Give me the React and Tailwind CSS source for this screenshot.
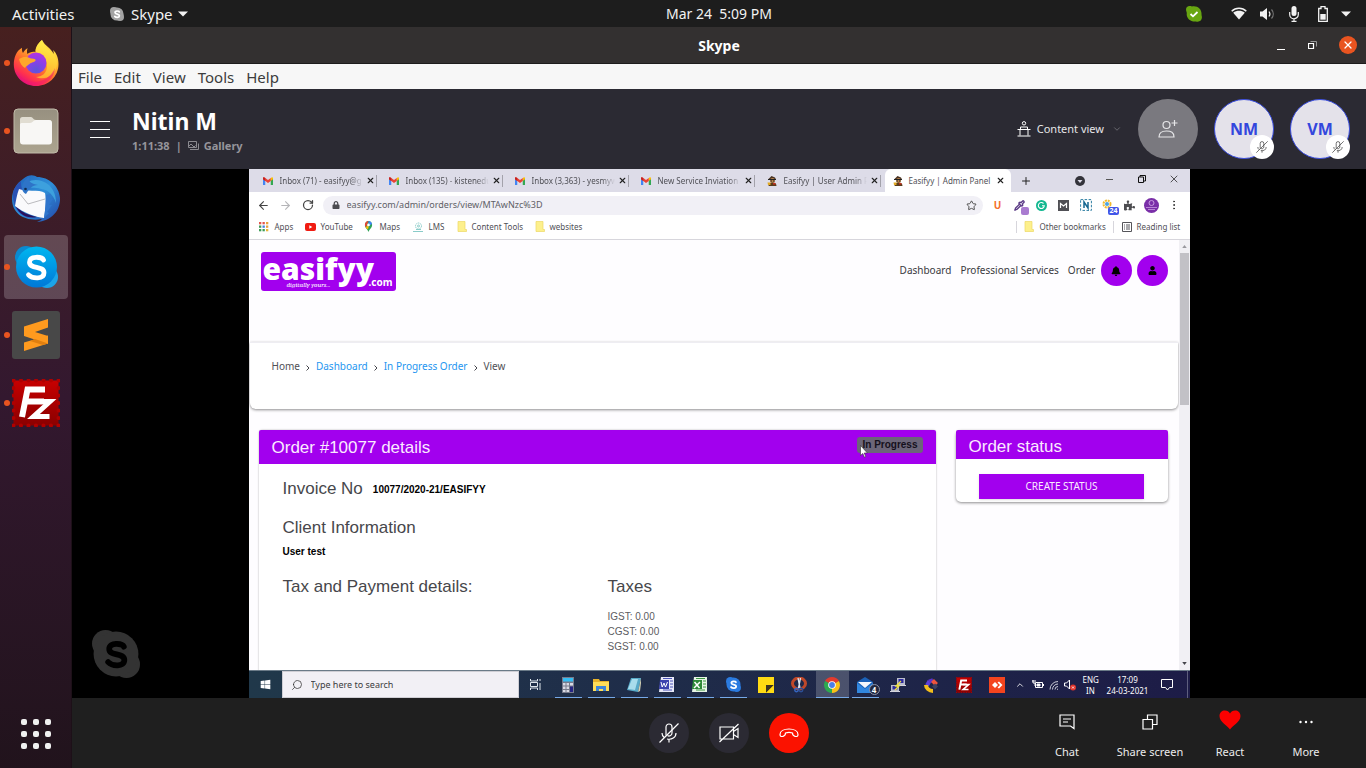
import React from "react";
import { FaBell, FaUser, FaPuzzlePiece, FaWindows, FaLock, FaHeart } from "react-icons/fa";
import { ArrowLeft, ArrowRight, RotateCw, Star, Pipette, Search, X, Plus, ChevronUp, ChevronDown, EllipsisVertical } from "lucide-react";

const dockApps = [
  { name: "Firefox", Icon: Firefox, running: true },
  { name: "Files", Icon: Files, running: true },
  { name: "Thunderbird", Icon: Thunderbird, running: false },
  { name: "Skype", Icon: SkypeLogo, running: true, active: true },
  { name: "Sublime Text", Icon: Sublime, running: true },
  { name: "FileZilla", Icon: FileZilla, running: true },
];

function Firefox() {
  return (
    <svg viewBox="0 0 48 48" className="size-12">
      <defs>
        <linearGradient id="ffBody" x1="0.85" y1="0.05" x2="0.25" y2="0.95">
          <stop offset="0" stopColor="#fff44f" />
          <stop offset="0.35" stopColor="#ffb52e" />
          <stop offset="0.62" stopColor="#ff6a2e" />
          <stop offset="0.85" stopColor="#ff2f4f" />
          <stop offset="1" stopColor="#e0107f" />
        </linearGradient>
        <radialGradient id="ffGlobe" cx="0.5" cy="0.85" r="0.9">
          <stop offset="0" stopColor="#5b56d8" />
          <stop offset="0.5" stopColor="#8a3fe8" />
          <stop offset="1" stopColor="#b833e1" />
        </radialGradient>
        <linearGradient id="ffFlame" x1="0.5" y1="0" x2="0.5" y2="1">
          <stop offset="0" stopColor="#fff34a" />
          <stop offset="1" stopColor="#ffbf2f" />
        </linearGradient>
      </defs>
      <path d="M30 1c-5 4-7 9-6.500 12-3-.8-6 .2-8 2-.8-2-.6-4 .1-5.800-2 1-3.500 2.700-4.600 4.700-1-1.500-1.200-3.500-1-5.200C4 12 1.800 19 1.800 25.500 2 38 12 47 24 47s22.500-9 22.500-22c0-6-2-11-5.500-14 .6 1.500.8 2.700.8 4C39 9 33 7 30 1z" fill="url(#ffBody)" />
      <path d="M30 1c-5 4-7 9-6 13 8 2 11 7 11 13 0 7-5 11-11 11 8 4 20-1 21-13C46 14 33 12 30 1z" fill="url(#ffFlame)" opacity=".8" />
      <circle cx="24" cy="24" r="10.500" fill="url(#ffGlobe)" />
      <path d="M7 20c4-3 9-2.500 12-.5 3 .3 5 .4 4.500 2-.8 2-4 1.500-6 3.500-2 1.800-3.500 2-4.500 4-3-1.500-5-5-6-9z" fill="#ffa72b" />
      <path d="M4 32c4 9 14 12 22 10.500C34 41 40 36 43 29c-1 11-10 17.500-19 17.500C14 46.500 6 40 4 32z" fill="#f0186f" opacity=".55" />
    </svg>
  );
}

function Files() {
  return (
    <svg viewBox="0 0 48 48" className="size-12">
      <defs>
        <linearGradient id="filesBg" x1="0" y1="0" x2="0" y2="1">
          <stop offset="0" stopColor="#979080" />
          <stop offset="1" stopColor="#aca48f" />
        </linearGradient>
      </defs>
      <rect x="2" y="2" width="44" height="44" rx="4" fill="url(#filesBg)" stroke="#c0baa9" strokeWidth="1" />
      <path d="M8 24V12.500A2.500 2.500 0 0 1 10.500 10H19c2 0 2 3 5 3h13a2.500 2.500 0 0 1 2.500 2.500V24z" fill="#e1ddd2" />
      <path d="M8 17.500A1.500 1.500 0 0 1 9.500 16H18c3 0 3-3 6-3h13a3 3 0 0 1 3 3v18.500a3 3 0 0 1-3 3H11a3 3 0 0 1-3-3z" fill="#f8f7f5" />
    </svg>
  );
}

function Thunderbird() {
  return (
    <svg viewBox="0 0 48 48" className="size-12">
      <defs>
        <linearGradient id="tbBody" x1="0" y1="0" x2="1" y2="1">
          <stop offset="0" stopColor="#1e5fb8" />
          <stop offset="0.5" stopColor="#2f8fd8" />
          <stop offset="1" stopColor="#2345a8" />
        </linearGradient>
      </defs>
      <path d="M11 4C17-1 22 0 25 2c12 0 22 9 23 21 .5 12-8 23-23 24 3-1 5-3 5-3C15 47 0 40 0 24 0 15 5 8 11 4z" fill="url(#tbBody)" />
      <path d="M1 20c0-6 4-11 8-14 0 6 1 10 4 12L7 29c1 8 6 12 12 14C8 42 1 33 1 20z" fill="#2851b4" />
      <path d="M10 14c4-10 17-12 27-4 5 5 7 11 7 18-3-9-8-13-15-14-7-2-14-1-19 0z" fill="#3da0dd" />
      <path d="M7 14c6 3 20 0 26 4 1 5 1 14-1 25-9-1-20-5-29-12 1-6 2-12 4-17z" fill="#fafafc" />
      <path d="M8 19l8 10 17-5" fill="none" stroke="#a9a9ad" strokeWidth=".8" />
      <path d="M10 14c0-5 2-9 7-12-1 5 3 7 9 8-6 0-9 4-12 9-2-1-3-2-4-5z" fill="#2e74c8" />
      <circle cx="13.500" cy="14" r="1.300" fill="#102a50" />
      <path d="M34 20l5-1-2 5 4 0-4 6 3 0-5 7 2 1-5 5c1-7 2-15 2-23z" fill="#2f76cd" />
      <path d="M4 32c6 5 12 8 21 10-9 2-17-2-21-10z" fill="#28105c" />
    </svg>
  );
}

const skypeS = "M31.500 17C30 13.500 17.500 12.500 17.500 19.200c0 7.300 14.500 3 14.500 10.600 0 6.700-11.500 6.200-15.500 2";

function SkypeLogo() {
  return (
    <svg viewBox="0 0 48 48" className="size-12">
      <defs>
        <linearGradient id="skBg" x1="0" y1="0" x2="0" y2="1">
          <stop offset="0" stopColor="#00b7f0" />
          <stop offset="1" stopColor="#0078d7" />
        </linearGradient>
      </defs>
      <circle cx="14" cy="14" r="11" fill="#0a8ad0" />
      <circle cx="35" cy="34" r="11" fill="#1ba4e8" />
      <circle cx="24.500" cy="24" r="20.500" fill="url(#skBg)" />
      <path d={skypeS} fill="none" stroke="#fff" strokeWidth="4.800" strokeLinecap="round" />
    </svg>
  );
}

function SkypeMono({ className, letter }) {
  return (
    <svg viewBox="1 1 46 46" className={className} aria-hidden="true">
      <g fill="currentColor"><circle cx="14" cy="14" r="13" /><circle cx="34" cy="34" r="13" /><circle cx="24" cy="24" r="21.500" /></g>
      <path d={skypeS} fill="none" stroke={letter} strokeWidth="5.500" strokeLinecap="round" />
    </svg>
  );
}

function Sublime() {
  return (
    <svg viewBox="0 0 48 48" className="size-12">
      <rect width="48" height="48" rx="3" fill="#484848" />
      <path d="M36 24.500v8L12 40v-8.500z" fill="#ff9a1e" />
      <path d="M36 8v8.500l-13 4.500 13 4v8L12 25v-9.500z" fill="#ff9a1e" />
      <path d="M23 28l13 4.500-5 1.500-13-4z" fill="#e07f10" />
    </svg>
  );
}

function FileZilla({ small }) {
  return (
    <svg viewBox="0 0 48 48" className={small ? "size-4" : "size-12"}>
      <defs>
        <linearGradient id="fzBg" x1="0" y1="0" x2="0" y2="1">
          <stop offset="0" stopColor="#c80000" />
          <stop offset="1" stopColor="#8a0000" />
        </linearGradient>
      </defs>
      <rect x="1.500" y="1.500" width="45" height="45" fill="url(#fzBg)" />
      <rect x="1.500" y="1.500" width="45" height="45" fill="none" stroke={small ? "#a80000" : "#b00000"} strokeWidth="4" strokeLinecap="round" strokeDasharray="0.1 7.400" />
      <g fill="none" stroke="#fff" strokeWidth="6">
        <path d="M33 10.500H15.500L10 38M13 22.500h19" />
        <path d="M21 22.500h17L21.500 37.500h16" strokeWidth="5" />
      </g>
    </svg>
  );
}

function Gmail() {
  return (
    <svg viewBox="0 0 20 16" className="h-2 w-[10px] shrink-0">
      <path d="M0 3v13h4.500V6z" fill="#4285f4" />
      <path d="M15.500 6v10H20V3z" fill="#34a853" />
      <path d="M15.500 2v6L20 4.500V2c0-2-2.500-2.500-4.500 0z" fill="#fbbc04" />
      <path d="M0 2v2.500L10 12l5.500-4V2L10 6 4.500 2C2.500 0 0 0 0 2z" fill="#ea4335" />
      <path d="M0 2v2.500L4.500 8V2C2 0 0 0 0 2z" fill="#c5221f" />
    </svg>
  );
}

function Detective() {
  return (
    <svg viewBox="0 0 20 20" className="size-[10px] shrink-0">
      <path d="M5 4l4-4 7 3 2 4H2z" fill="#4a3322" />
      <circle cx="11" cy="9" r="5" fill="#b98248" />
      <path d="M2 6h16v2H2zM7 9h3v2H7zM12 9h3v2h-3z" fill="#222" />
      <path d="M3 20c0-5 3-7 8-7s8 2 8 7z" fill="#5a3c1c" />
      <path d="M1 13h6v5H2z" fill="#e2aa22" />
      <path d="M12 14h5v3h-5z" fill="#c92d1c" />
    </svg>
  );
}

function Folder() {
  return (
    <svg viewBox="0 0 10 11" className="h-[11px] w-[10px] shrink-0">
      <path d="M1 .500h7v8h1.500v2H1z" fill="#fdf08c" stroke="#ecd964" strokeWidth=".7" />
    </svg>
  );
}

function MicOff({ className }) {
  return (
    <svg viewBox="0 0 20 20" className={className} fill="none" stroke="currentColor" strokeWidth="1.200">
      <path d="M7 12.500V4a3 3 0 0 1 6 0v6a3 3 0 0 1-4.500 2.600" />
      <path d="M3 10c0 2 .8 3.300 2 4.300M8 16c4.800 1 9-1.500 9-6M10 16v3.500M.500 19.500l19-19" />
    </svg>
  );
}

const tabs = [
  { title: "Inbox (71) - easifyy@g", Icon: Gmail },
  { title: "Inbox (135) - kistenedu", Icon: Gmail },
  { title: "Inbox (3,363) - yesmyw", Icon: Gmail },
  { title: "New Service Inviation -", Icon: Gmail },
  { title: "Easifyy | User Admin Pa", Icon: Detective },
  { title: "Easifyy | Admin Panel", Icon: Detective, active: true },
];

function TopBar() {
  return (
    <header className="grid h-[27px] shrink-0 grid-cols-[1fr_auto_1fr] items-center bg-[#1d1d1d] text-[14px] text-[#f2f2f2]">
      <div className="flex items-center pl-3 text-[15px] leading-5">
        <button className="w-[98px] text-left">Activities</button>
        <button className="flex items-center gap-[7px]">
          <SkypeMono className="size-[14px] text-[#a3a3a3]" letter="#fff" />
          Skype
          <svg viewBox="0 0 10 6" className="-ml-[2px] h-[6px] w-[10px]"><path d="M0 .500h10L5 5.500z" fill="#f2f2f2" /></svg>
        </button>
      </div>
      <button className="pl-[72px] whitespace-pre">Mar 24  5:09 PM</button>
      <div className="flex items-center justify-end pr-[15px]">
        <svg viewBox="0 0 16 16" className="mr-[29px] size-4">
          <path d="M0 4C0 0 3-.5 6 .5c6-1 10 3 9.500 8.500 1.500 4-1 7.500-5.500 6.500C4 16 0 12 .8 7z" fill="#68a611" />
          <path d="M4.500 8l2.500 2.300 4.500-4.300" fill="none" stroke="#fff" strokeWidth="1.800" />
        </svg>
        <svg viewBox="0 0 16 13" className="mr-3 h-[13px] w-4">
          <path d="M.700 4.300c4-4 10.600-4 14.600 0" fill="none" stroke="#f2f2f2" strokeWidth="1.500" />
          <path d="M8 12.500L2.200 5.800c3.500-2.600 8.100-2.600 11.600 0z" fill="#f2f2f2" />
        </svg>
        <svg viewBox="0 0 16 14" className="mr-[14px] h-[14px] w-4">
          <path d="M1 4.500h2.500L8 1v12L3.500 9.500H1z" fill="#f2f2f2" />
          <path d="M10 4.500c1.200 1.600 1.200 3.400 0 5" fill="none" stroke="#f2f2f2" strokeWidth="1.200" />
          <path d="M12.500 2.500c2.300 2.600 2.300 6.400 0 9" fill="none" stroke="#777" strokeWidth="1.200" />
        </svg>
        <svg viewBox="0 0 10 16" className="mr-[19px] h-4 w-[10px]">
          <rect x="2.500" y="0" width="5" height="10" rx="2.500" fill="#f2f2f2" />
          <path d="M.7 6v2.500a4.300 4.300 0 0 0 8.600 0V6M5 12.500V15M2.500 15.300h5" fill="none" stroke="#f2f2f2" strokeWidth="1.200" />
        </svg>
        <svg viewBox="0 0 10 16" className="mr-[13px] h-4 w-[10px]">
          <path d="M3 .500h4v2h2.300v12.800H.700V2.500H3z" fill="none" stroke="#f2f2f2" strokeWidth="1.300" /><path d="M2.300 8h5.400v5.700H2.300z" fill="#f2f2f2" />
        </svg>
        <svg viewBox="0 0 10 6" className="h-[6px] w-[10px]"><path d="M0 .500h10L5 5.500z" fill="#f2f2f2" /></svg>
      </div>
    </header>
  );
}

function Dock() {
  return (
    <nav aria-label="Dock" className="flex w-[72px] shrink-0 flex-col border-r border-[#1d1018] bg-linear-to-b from-[#47201f] via-[#33182f] via-50% to-[#21131c] pt-[2px]">
      {dockApps.map(({ name, Icon, running, active }) => (
        <button key={name} aria-label={name} className="flex h-[68px] items-center pl-1">
          <span className={active ? "flex size-16 items-center rounded bg-white/20" : "flex size-16 items-center"}>
            <span className={running ? "size-[6px] rounded-full bg-[#e95420]" : "size-[6px]"} />
            <span className="ml-[2px]"><Icon /></span>
          </span>
        </button>
      ))}
      <button aria-label="Show applications" className="mt-auto mb-[19px] grid grid-cols-3 gap-[6px] self-center">
        {Array.from({ length: 9 }, (_, i) => (
          <span key={i} className="size-[6px] rounded-xs bg-[#f0f0f0]" />
        ))}
      </button>
    </nav>
  );
}

function WindowTitle() {
  return (
    <div className="grid h-[37px] shrink-0 grid-cols-[1fr_auto_1fr] items-center border-b border-[#1d1c1c] bg-[#333030]">
      <span />
      <h1 className="text-[14px] font-bold text-white">Skype</h1>
      <div className="flex items-center justify-end gap-[22px] pr-[9px] text-white">
        <button aria-label="Minimize" className="flex size-[9px] items-end"><span className="h-px w-2 bg-white" /></button>
        <button aria-label="Restore">
          <svg viewBox="0 0 9 9" className="size-[9px]" fill="none"><path d="M.5 2.500h5v5h-5z" stroke="#fff" strokeWidth="1.200" /><path d="M2.500.500h6v5" stroke="#999" /></svg>
        </button>
        <button aria-label="Close" className="flex size-[18px] items-center justify-center rounded-full bg-[#e95420]">
          <X className="size-3" strokeWidth={2.600} />
        </button>
      </div>
    </div>
  );
}

function Avatar({ initials }) {
  return (
    <button className="relative flex size-[60px] items-center justify-center rounded-full border border-[#3b4ee0] bg-[#e4e2ea] text-[16px] font-bold text-[#3347dd]">
      {initials}
      <span className="absolute -right-px -bottom-px flex size-6 items-center justify-center rounded-full bg-white text-[#3c3c3c]">
        <MicOff className="size-3" />
      </span>
    </button>
  );
}

function CallHeader() {
  return (
    <div className="flex h-20 shrink-0 items-center justify-between bg-[#2b2a33] pr-4 pl-[18px] text-white">
      <div className="flex items-center gap-[22px]">
        <button aria-label="Menu" className="flex flex-col gap-[7px]">
          <span className="h-px w-5 bg-white" /><span className="h-px w-5 bg-white" /><span className="h-px w-5 bg-white" />
        </button>
        <div className="pt-1">
          <h2 className="text-[23px] leading-[28px] font-bold">Nitin M</h2>
          <div className="flex items-center pt-px text-[11px] leading-5 font-bold text-[#96959b]">
            1:11:38 <span className="mx-[6px]">|</span>
            <svg viewBox="0 0 11 10" className="mr-[5px] h-[10px] w-[11px]" fill="none" stroke="currentColor" strokeWidth=".9"><path d="M.5.500h8v6h-8zM2 8.500h8.500V2.500M1 5l2-2 3 3 1.500-1.500" /></svg>
            Gallery
          </div>
        </div>
      </div>
      <div className="flex items-center gap-4">
        <button className="flex items-center text-[11px] leading-4 text-[#e6e6e8]">
          <svg viewBox="0 0 14 16" className="mr-[6px] h-4 w-[14px]" fill="none" stroke="#fff"><circle cx="7" cy="2.300" r="1.700" /><path d="M3.500 8V6h7v2M.500 8.500h13M3 8.500v6M11 8.500v6M.500 15h13" /></svg>
          Content view
          <ChevronDown className="ml-2 size-[10px] text-[#8c8b92]" strokeWidth={1.500} />
        </button>
        <button aria-label="Add people" className="flex size-[60px] items-center justify-center rounded-full bg-[#7a797f]">
          <svg viewBox="0 0 20 18" className="h-[18px] w-5" fill="none" stroke="#e6e6e8" strokeWidth="1.200"><circle cx="8.500" cy="5" r="3.500" /><path d="M1 17c0-4.500 3-6 7.500-6s7.500 1.500 7.500 6zM16.500 0v6M13.500 3h6" /></svg>
        </button>
        <Avatar initials="NM" />
        <Avatar initials="VM" />
      </div>
    </div>
  );
}

function TabStrip() {
  return (
    <div className="flex h-[23px] shrink-0 bg-[#dddce8] pl-[6px] text-[8px] text-[#505056]">
      {tabs.map(({ title, Icon, active }) => (
        <div key={title} className={active ? "flex w-[126px] shrink-0 items-center rounded-t-md bg-white pr-[6px] pl-2" : "flex w-[126px] shrink-0 items-center pr-1 pl-2"}>
          <Icon />
          <button className={active ? "ml-[6px] text-left whitespace-nowrap" : "ml-[7px] w-[83px] overflow-hidden mask-r-from-85% text-left whitespace-nowrap"}>{title}</button>
          <button aria-label="Close tab" className={active ? "ml-auto" : "ml-[3px]"}><X className="size-[9px] text-[#222]" strokeWidth={3} /></button>
          {!active && <span className="ml-auto h-3 w-px shrink-0 bg-[#a3a2ab]" />}
        </div>
      ))}
      <button aria-label="New tab" className="flex w-[30px] items-center justify-center"><Plus className="size-3 text-[#222]" /></button>
      <button aria-label="Search tabs" className="ml-auto flex w-7 items-center justify-center">
        <svg viewBox="0 0 10 10" className="size-[10px]"><circle cx="5" cy="5" r="5" fill="#33333a" /><path d="M2.500 4h5L5 7z" fill="#dddce8" /></svg>
      </button>
      <button aria-label="Minimize browser" className="flex w-8 items-center justify-center"><span className="mb-[3px] h-px w-[7px] bg-[#555]" /></button>
      <button aria-label="Restore browser" className="flex w-8 items-center justify-center">
        <svg viewBox="0 0 8 8" className="mb-1 size-2" fill="none" stroke="#111"><path d="M.5 2h5v5.500h-5zM2 2V.500h5.500V6H6" /></svg>
      </button>
      <button aria-label="Close browser" className="flex w-8 items-center justify-center"><X className="mb-[3px] size-3 text-[#222]" strokeWidth={1.500} /></button>
    </div>
  );
}

const cell = "flex w-[22px] shrink-0 items-center justify-center";

function Toolbar() {
  return (
    <div className="flex h-[26px] shrink-0 items-center bg-white pr-[5px] pl-1">
      <button aria-label="Back" className={cell}><ArrowLeft className="size-[13px] text-[#444]" /></button>
      <button aria-label="Forward" className={cell}><ArrowRight className="size-[13px] text-[#b5b5b8]" /></button>
      <button aria-label="Reload" className={cell}><RotateCw className="size-3 text-[#444]" strokeWidth={2.500} /></button>
      <div className="mx-1 flex h-[19px] min-w-0 flex-1 items-center rounded-full bg-[#f1f0f6] pr-[6px] pl-[9px]">
        <FaLock className="mr-[7px] size-[8px] text-[#4c4c50]" />
        <input aria-label="Address" defaultValue="easifyy.com/admin/orders/view/MTAwNzc%3D" className="min-w-0 flex-1 bg-transparent text-[9px] text-[#606066] outline-none" />
        <button aria-label="Bookmark"><Star className="size-[11px] text-[#444]" /></button>
      </div>
      <button aria-label="Extension U" className={cell}><span className="text-[10px] font-bold text-[#f4702c]">U</span></button>
      <button aria-label="Colour picker" className={cell}>
        <span className="relative"><Pipette className="size-[11px] text-[#5b3b86]" strokeWidth={3} /><span className="absolute -right-1 -bottom-1 size-2 rounded-xs bg-[#a97bd0]" /></span>
      </button>
      <button aria-label="Grammar" className={cell}>
        <svg viewBox="0 0 11 11" className="size-[11px]"><circle cx="5.500" cy="5.500" r="5.500" fill="#13b890" /><path d="M7.500 3.500a3 3 0 1 0 .8 2.300H6" fill="none" stroke="#fff" strokeWidth="1.100" /></svg>
      </button>
      <button aria-label="Mail tracker" className={cell}>
        <svg viewBox="0 0 11 11" className="size-[11px]"><path d="M0 0h11v11H0z" fill="#505055" /><path d="M2.500 8V3.500l3 2.500 3-2.500V8" fill="none" stroke="#fff" strokeWidth="1.200" /></svg>
      </button>
      <button aria-label="Notes" className={cell}>
        <svg viewBox="0 0 12 12" className="size-3"><path d="M.6.600h10.800v10.800H.600z" fill="none" stroke="#2f7fa3" strokeDasharray="2.500 1.500" /><path d="M4 9V3l4 6V3" fill="none" stroke="#176790" strokeWidth="1.500" /></svg>
      </button>
      <button aria-label="Calendar" className={cell}>
        <span className="relative">
          <svg viewBox="0 0 12 12" className="size-3"><circle cx="5" cy="5" r="3.500" fill="none" stroke="#f2b92c" strokeWidth="2" strokeDasharray="2 .8" /><circle cx="5" cy="5" r="2" fill="#4ba3e3" /></svg>
          <span className="absolute -right-[5px] -bottom-1 rounded-xs bg-[#4257e8] px-px text-[7px] leading-[8px] font-bold text-white">24</span>
        </span>
      </button>
      <button aria-label="Extensions" className={cell}>
        <FaPuzzlePiece className="size-[11px] text-[#4c4c50]" />
      </button>
      <button aria-label="Profile" className={cell}>
        <svg viewBox="0 0 15 15" className="size-[15px]"><circle cx="7.500" cy="7.500" r="7.500" fill="#7a2fa8" /><circle cx="7.500" cy="5" r="2.500" fill="none" stroke="#c99be2" /><path d="M2 9.500h11M4 11.500h7" stroke="#b885d6" /></svg>
      </button>
      <button aria-label="Browser menu" className={cell}><EllipsisVertical className="size-3 text-[#333]" /></button>
    </div>
  );
}

function AppsIcon() {
  const colors = ["#e2574c", "#e2574c", "#e8a33d", "#3e9d57", "#3f7fe0", "#e8a33d", "#3e9d57", "#3e9d57", "#e8b53d"];
  return (
    <svg viewBox="0 0 10 10" className="size-[10px]">
      {colors.map((c, i) => <rect key={i} x={(i % 3) * 3.500} y={Math.floor(i / 3) * 3.500} width="2.300" height="2.300" fill={c} />)}
    </svg>
  );
}

function Bookmarks() {
  return (
    <nav aria-label="Bookmarks" className="flex h-[22px] shrink-0 items-center border-b border-[#d7d6dc] bg-white pb-[4px] pl-[10px] text-[8px] text-[#505056]">
      <a href="#apps" className="flex w-[46px] items-center gap-[6px]"><AppsIcon />Apps</a>
      <a href="#youtube" className="flex w-[59px] items-center gap-[5px]">
        <svg viewBox="0 0 11 8" className="h-2 w-[11px]"><rect width="11" height="8" rx="2" fill="#f01c12" /><path d="M4.300 2.200v3.600L7.300 4z" fill="#fff" /></svg>YouTube
      </a>
      <a href="#maps" className="flex w-[49px] items-center gap-[7px]">
        <svg viewBox="0 0 10 12" className="h-[11px] w-[9px]"><path d="M5 12C4 9 1 7.500 1 4.300A4 4 0 0 1 5 0a4 4 0 0 1 4 4.300C9 7.500 6 9 5 12z" fill="#2fa455" /><path d="M1 4.300A4 4 0 0 1 5 0l-3 7C1.300 6 1 5 1 4.300z" fill="#ea4335" /><path d="M5 0a4 4 0 0 1 4 3L5 6z" fill="#4285f4" /><path d="M2 7l3-3.500L5 8l-1.500 1z" fill="#fbbc04" /><circle cx="5" cy="4.200" r="1.500" fill="#fff" /></svg>Maps
      </a>
      <a href="#lms" className="flex w-[44px] items-center gap-[6px]">
        <svg viewBox="0 0 10 10" className="size-[10px]" fill="none" stroke="#8accc9"><circle cx="5.500" cy="4" r="3" strokeDasharray="1.500 .7" /><circle cx="5.500" cy="4" r="1" /><path d="M0 9.500h10M3 7.500h5" /></svg>LMS
      </a>
      <a href="#content" className="flex w-[78px] items-center gap-[5px]"><Folder />Content Tools</a>
      <a href="#websites" className="flex items-center gap-[5px]"><Folder />websites</a>
      <div className="ml-auto flex items-center">
        <a href="#other" className="flex w-[97px] items-center gap-[6px] border-l border-[#d7d6dc] pl-[7px]"><Folder />Other bookmarks</a>
        <button className="flex w-[77px] items-center gap-[5px] border-l border-[#d7d6dc] pl-2">
          <svg viewBox="0 0 10 10" className="size-[10px]" fill="none" stroke="#55555a"><path d="M.5.500h9v9h-9zM2 3h1M4 3h4M2 5h1M4 5h4M2 7h1M4 7h4" /></svg>Reading list
        </button>
      </div>
    </nav>
  );
}

function Logo() {
  return (
    <a href="#home" aria-label="easifyy.com" className="relative block h-[39px] w-[135px] rounded-[3px] bg-[#a200ee] pl-[2px] text-white">
      <span className="block font-['Open_Sans'] text-[30px] leading-[33px] font-extrabold">easifyy</span>
      <span className="absolute bottom-[2px] left-[26px] font-serif text-[7px] leading-[8px] italic">digitally yours...</span>
      <span className="absolute right-[3px] bottom-[3px] text-[10px] leading-[12px] font-bold">.com</span>
    </a>
  );
}

function Crumb() {
  return <svg viewBox="0 0 4 6" className="mt-[6px] h-[6px] w-1" fill="none" stroke="#45454b"><path d="M.5.500L3 3 .500 5.500" /></svg>;
}

function AdminPage() {
  return (
    <div className="flex min-h-0 flex-1 bg-[#fefdff]">
      <main className="min-w-0 flex-1 overflow-hidden">
        <header className="flex h-[102px] items-start justify-between pt-3 pr-[11px] pl-3">
          <Logo />
          <nav className="flex items-center gap-[9px] pt-[3px] text-[10px] text-[#3a3a3e]">
            <a href="#dashboard">Dashboard</a>
            <a href="#services">Professional Services</a>
            <a href="#order">Order</a>
            <div className="-ml-1 flex gap-[5px]">
              <button aria-label="Notifications" className="flex size-[31px] items-center justify-center rounded-full bg-[#a200ee] text-black"><FaBell className="size-[10px]" /></button>
              <button aria-label="Account" className="flex size-[31px] items-center justify-center rounded-full bg-[#a200ee] text-black"><FaUser className="size-[9px]" /></button>
            </div>
          </nav>
        </header>
        <nav aria-label="Breadcrumb" className="mx-px flex h-[67px] items-start gap-[6px] rounded-b-md border-t border-[#eeedf2] bg-white pt-4 pl-[22px] text-[10px] leading-[15px] text-[#505056] shadow-[0_1px_3px_rgba(0,0,0,0.45)]">
          <span>Home</span><Crumb />
          <a href="#dashboard" className="text-[#1e96f0]">Dashboard</a><Crumb />
          <a href="#in-progress" className="text-[#1e96f0]">In Progress Order</a><Crumb />
          <span>View</span>
        </nav>
        <div className="flex items-start gap-5 pt-[21px] pr-[11px] pl-[10px] font-['Liberation_Sans',sans-serif]">
          <section className="h-[260px] min-w-0 flex-1 rounded-sm bg-white shadow-[0_0_2px_rgba(0,0,0,0.35)]">
            <div className="flex h-[34px] items-start justify-between rounded-t-xs bg-[#a200ee] pr-[13px] pl-[13px]">
              <h2 className="text-[17px] leading-[35px] text-[#fbeaff]">Order #10077 details</h2>
              <span className="relative mt-[7px] rounded-[3px] bg-[#6c6679] px-[5px] text-[10px] leading-4 font-bold text-[#15101c]">
                In Progress
                <svg viewBox="0 0 8 13" className="absolute top-[8px] left-[3px] h-[13px] w-2"><path d="M.500.500v10l2.300-2 1.600 3.700 1.400-.6-1.600-3.600h3.200z" fill="#fff" stroke="#333" strokeWidth=".6" /></svg>
              </span>
            </div>
            <div className="pl-6 text-[#47474b]">
              <div className="flex items-center gap-[10px] pt-[15px]">
                <h3 className="text-[17px] leading-5">Invoice No</h3>
                <strong className="text-[10px] text-black">10077/2020-21/EASIFYY</strong>
              </div>
              <h3 className="pt-[19px] text-[17px] leading-5">Client Information</h3>
              <strong className="block pt-[6px] text-[10px] leading-[15px] text-black">User test</strong>
              <div className="flex pt-[18px]">
                <h3 className="w-[325px] text-[17px] leading-5">Tax and Payment details:</h3>
                <div>
                  <h3 className="text-[17px] leading-5">Taxes</h3>
                  <ul className="pt-3 text-[10px] leading-[15px] text-[#5c5c61]"><li>IGST: 0.00</li><li>CGST: 0.00</li><li>SGST: 0.00</li></ul>
                </div>
              </div>
            </div>
          </section>
          <aside className="w-[212px] rounded-[5px] bg-white pb-[3px] shadow-[0_1px_3px_rgba(0,0,0,0.45)]">
            <h2 className="rounded-t-xs bg-[#a200ee] pt-[5px] pl-[13px] text-[17px] leading-6 text-[#fbeaff]">Order status</h2>
            <button className="mx-auto mt-[15px] block h-[25px] w-[165px] bg-[#a200ee] font-['Noto_Sans'] text-[10px] text-[#fbeaff] shadow-sm">CREATE STATUS</button>
          </aside>
        </div>
      </main>
      <div aria-hidden="true" className="flex w-[11px] shrink-0 flex-col items-center bg-[#f1f0f4]">
        <svg viewBox="0 0 6 4" className="my-[5px] h-[3px] w-[5px]"><path d="M0 4h6L3 0z" fill="#99989e" /></svg>
        <span className="h-[152px] w-[9px] bg-[#c2c1c6]" />
        <svg viewBox="0 0 6 4" className="mt-auto mb-[5px] h-[3px] w-[5px]"><path d="M0 0h6L3 4z" fill="#44444a" /></svg>
      </div>
    </div>
  );
}

function Chrome() {
  return (
    <svg viewBox="0 0 16 16" className="size-4">
      <path d="M8 8L1.100 4A8 8 0 0 1 14.900 4z" fill="#e33b2e" />
      <path d="M8 8l6.900-4A8 8 0 0 1 8 16z" fill="#fbc116" />
      <path d="M8 8v8A8 8 0 0 1 1.100 4z" fill="#2da94f" />
      <circle cx="8" cy="8" r="3.800" fill="#fff" /><circle cx="8" cy="8" r="2.900" fill="#4a7fe8" />
    </svg>
  );
}

const art = "size-4";
const taskApps = [
  { name: "Calculator", open: true, icon: <svg viewBox="0 0 16 16" className={art}><path d="M2 0h12v16H2z" fill="#777b8c" /><path d="M3 1h10v3.500H3z" fill="#35bdf3" /><path d="M3 6h2.500v2.500H3zM6.500 6H9v2.500H6.500zM3 9.500h2.500V12H3zM6.500 9.500H9V12H6.500zM3 13h2.500v2H3zM6.500 13H9v2H6.500zM10 6h3v2.500h-3z" fill="#d8dae4" /><path d="M10 9.500h3V15h-3z" fill="#262583" /></svg> },
  { name: "File Explorer", open: true, icon: <svg viewBox="0 0 16 16" className={art}><path d="M0 2h6l1 2h9v10H0z" fill="#e8b32a" /><path d="M0 5h16v9H0z" fill="#ffde58" /><path d="M3 9h10v5h-3v-2H6v2H3z" fill="#3f86d6" /></svg> },
  { name: "Notepad", open: true, icon: <svg viewBox="0 0 16 16" className={art}><path d="M5 1h10l-3 14-11-2z" fill="#58a9c7" /><path d="M6 2h6L9 13l-7-1z" fill="#a8dcec" /><path d="M15 1l-3 14 2-1 1-8z" fill="#d4d2b5" /></svg> },
  { name: "Word", open: true, icon: <svg viewBox="0 0 16 16" className={art}><path d="M2 0h13v15H0z" fill="#e7e9f8" /><path d="M4 1.500h9M11 4h3M11 7h3M11 10h3M4 13h9" stroke="#4a55b8" /><path d="M1 3h9v9H0z" fill="#3c43ae" /><path d="M2 5l1.200 5L5 6l1.500 4L8.500 5" fill="none" stroke="#fff" /></svg> },
  { name: "Excel", open: true, icon: <svg viewBox="0 0 16 16" className={art}><path d="M2 0h13v15H0z" fill="#e6f5e4" /><path d="M4 1.500h9M11 4h3M11 7h3M11 10h3M4 13h9" stroke="#3c9642" /><path d="M1 3h9v9H0z" fill="#2f8a38" /><path d="M2.500 5l5 6M8 5l-6 6" fill="none" stroke="#fff" strokeWidth="1.500" /></svg> },
  { name: "Skype", open: true, icon: <SkypeMono className="size-[15px] text-[#2b7be0]" letter="#fff" /> },
  { name: "Sticky Notes", icon: <svg viewBox="0 0 16 16" className={art}><path d="M0 0h16v16H0z" fill="#ffdb13" /><path d="M8 8h8l-8 8z" fill="#3b3420" /><path d="M16 8v8H8z" fill="#ffdb13" /></svg> },
  { name: "Snipping Tool", icon: <svg viewBox="0 0 16 16" className={art}><ellipse cx="8" cy="6.500" rx="6.500" ry="5.500" fill="none" stroke="#c0482a" strokeWidth="3" /><path d="M7 1l2 10M9.500 1L7.500 11" stroke="#dfe6f0" strokeWidth="1.300" /><circle cx="5.500" cy="13" r="1.700" fill="none" stroke="#3566c0" strokeWidth="1.500" /><circle cx="10" cy="13" r="1.700" fill="none" stroke="#2c4f96" strokeWidth="1.500" /></svg> },
  { name: "Chrome", open: true, active: true, icon: <Chrome /> },
  { name: "Mail", open: true, badge: 4, icon: <svg viewBox="0 0 16 16" className={art}><path d="M0 5l8-5 8 5v11H0z" fill="#1c62b8" /><path d="M1 5h14l-7 6z" fill="#f5f8fc" /><path d="M0 6l8 6 8-6v10H0z" fill="#3187e0" /></svg> },
  { name: "PuTTY", icon: <svg viewBox="0 0 16 16" className={art}><path d="M7 1h8v7H7zM1 8h8v6H1z" fill="#b9bccb" /><path d="M8.500 2h5v4h-5zM2.500 9h5v3.500h-5z" fill="#2d2aa0" /><path d="M0 14.500h10M8 8.500h8" stroke="#d4d5dd" /><path d="M11 4L6 9h3l-4 4" fill="none" stroke="#f0e13a" strokeWidth="1.300" /></svg> },
  { name: "Paint", icon: <svg viewBox="0 0 16 16" className={art} fill="none" strokeWidth="4"><path d="M4 8.500L6.500 4" stroke="#5b3fd8" /><path d="M6 4.500L10 3" stroke="#5a35c8" /><path d="M9.500 3.500l4 4" stroke="#f0553c" /><path d="M13.500 8L10.500 11" stroke="#3d4260" /><path d="M3 8c0 3 3 6 7 6" stroke="#f2bd1c" /></svg> },
  { name: "FileZilla", icon: <FileZilla small /> },
  { name: "AnyDesk", icon: <svg viewBox="0 0 16 16" className={art}><path d="M0 0h16v16H0z" fill="#f4441e" /><path d="M3 8l3-3 3 3-3 3z" fill="#fff" /><path d="M8.500 5.500L10 4.500 13.500 8 10 11.500l-1.500-1L11 8z" fill="#fff" /></svg> },
];

function Taskbar() {
  return (
    <div className="flex h-7 shrink-0 items-stretch border-t border-[#6b7b88] bg-linear-to-r from-[#20384a] to-[#1d1c47] text-white">
      <button aria-label="Start" className="flex w-[33px] shrink-0 items-center justify-center"><FaWindows className="size-[11px]" /></button>
      <label className="flex w-[237px] shrink-0 items-center gap-2 border border-[#cfced4] bg-[#f2f0f5] pl-2 text-[#333]">
        <Search className="size-3 -scale-x-100" strokeWidth={1.500} />
        <input aria-label="Search" placeholder="Type here to search" className="min-w-0 flex-1 bg-transparent text-[9px] outline-none placeholder:text-[#3c3c40]" />
      </label>
      <button aria-label="Task view" className="flex w-[33px] shrink-0 items-center justify-center">
        <svg viewBox="0 0 11 11" className="size-[11px]" fill="none" stroke="#dfe6ec"><path d="M.5 0v2h7V0M.500 3.500h7v4h-7zM.500 11V9h7v2M10 0v2M10 4v7" /></svg>
      </button>
      {taskApps.map(({ name, icon, open, active, badge }) => (
        <button key={name} aria-label={name} className={active ? "relative flex w-[33px] shrink-0 items-center justify-center bg-white/20" : "relative flex w-[33px] shrink-0 items-center justify-center"}>
          {icon}
          {badge && <span className="absolute right-[2px] bottom-[3px] flex size-[11px] items-center justify-center rounded-full border border-[#8c93a8] bg-[#22283f] text-[8px] font-bold">{badge}</span>}
          {open && <span className={active ? "absolute inset-x-0 bottom-0 h-px bg-[#76a9e8]" : "absolute inset-x-[3px] bottom-0 h-px bg-[#76a9e8]"} />}
        </button>
      ))}
      <div className="ml-auto flex items-center text-center text-[8px] leading-[11px]">
        <button aria-label="Hidden icons" className="w-[17px]"><ChevronUp className="size-[10px]" strokeWidth={2} /></button>
        <svg viewBox="0 0 12 9" className="mr-[5px] h-[9px] w-3" fill="none" stroke="#fff"><path d="M3.500 2.500h7v5h-7zM11.500 4v2M0 1h4M1 0v3h2v3" /><path d="M5 4h3v2H5z" fill="#fff" /></svg>
        <svg viewBox="0 0 10 10" className="mr-[5px] size-[10px]" fill="none" stroke="#c9cad6"><path d="M1 9.500a8 8 0 0 1 8-8M3.500 9.500A5.500 5.500 0 0 1 9 4M6 9.500A3 3 0 0 1 9 6.500M8 9l1 .5" /></svg>
        <svg viewBox="0 0 12 12" className="mr-[7px] size-3"><path d="M.5 4h2l3-3v9l-3-3h-2z" fill="none" stroke="#fff" /><circle cx="9" cy="8.500" r="3" fill="#e0342c" /><path d="M8 7.500l2 2M10 7.500l-2 2" stroke="#fff" strokeWidth=".8" /></svg>
        <button className="mr-2 w-4">ENG IN</button>
        <button className="mr-3 w-[42px] whitespace-nowrap">17:09<br />24-03-2021</button>
        <button aria-label="Action center" className="mr-[14px] flex">
          <svg viewBox="0 0 12 12" className="size-3" fill="none" stroke="#fff"><path d="M.5.500h11v8h-3l-2 2.500-2-2.500h-4z" /></svg>
        </button>
        <span className="mr-[2px] h-7 w-px bg-[#5e5f7e]" />
      </div>
    </div>
  );
}

function Stage() {
  return (
    <div className="relative flex min-h-0 flex-1 justify-center bg-black">
      <div className="flex aspect-[941/529] h-full flex-col overflow-hidden">
        <TabStrip />
        <Toolbar />
        <Bookmarks />
        <AdminPage />
        <Taskbar />
      </div>
      <SkypeMono className="absolute bottom-5 left-5 size-12 text-[#333]" letter="#000" />
    </div>
  );
}

function Action({ label, width, children }) {
  return (
    <button className={`flex flex-col items-center pt-1 text-[11px] leading-4 text-[#ececec] ${width}`}>
      <span className="flex h-[34px] items-start justify-center">{children}</span>
      {label}
    </button>
  );
}

function CallControls() {
  return (
    <footer className="grid h-[70px] shrink-0 grid-cols-[1fr_auto_1fr] items-center bg-[#1f1f1f] pl-5">
      <span />
      <div className="flex gap-5 text-white">
        <button aria-label="Unmute" className="flex size-10 items-center justify-center rounded-full bg-[#2b2a33]"><MicOff className="size-5" /></button>
        <button aria-label="Start video" className="flex size-10 items-center justify-center rounded-full bg-[#2b2a33]">
          <svg viewBox="0 0 20 20" className="size-5" fill="none" stroke="currentColor" strokeWidth="1.200"><path d="M14.500 4H1v12h13.500zM14.500 8.500l4.500-3v9l-4.500-3M.500 19l19-18" /></svg>
        </button>
        <button aria-label="End call" className="flex size-10 items-center justify-center rounded-full bg-[#fb1200]">
          <svg viewBox="0 0 20 10" className="h-[10px] w-5" fill="none" stroke="currentColor" strokeWidth="1.200"><path d="M1 6.500C1 3 5 1 10 1s9 2 9 5.500c0 2-1 2.300-3 1.800S13.500 7 13.500 5c-2-.8-5-.8-7 0 0 2-.5 2.800-2.500 3.300S1 8.500 1 6.500z" /></svg>
        </button>
      </div>
      <div className="flex justify-end pr-[21px]">
        <Action label="Chat" width="w-20">
          <svg viewBox="0 0 16 16" className="mt-1 size-4" fill="none" stroke="#fff" strokeWidth="1.200"><path d="M1 1h14v13.500L11.500 12H1zM4 5h8M4 8h5" /></svg>
        </Action>
        <Action label="Share screen" width="w-[86px]">
          <svg viewBox="0 0 16 16" className="mt-1 size-4" fill="none" stroke="#fff" strokeWidth="1.200"><path d="M1 5.500h9.500V15H1zM5.500 5V1H15v9.500h-4" /></svg>
        </Action>
        <Action label="React" width="w-[74px]">
          <svg viewBox="0 0 22 20" className="h-5 w-[22px]"><path d="M11 19.500C9 16 .500 12 .500 6 .500 2.500 3 .500 6 .500c2.200 0 4 1.200 5 3 1-1.800 2.800-3 5-3 3 0 5.500 2 5.500 5.500 0 6-8.500 10-10.500 13.500z" fill="#fb0000" /></svg>
        </Action>
        <Action label="More" width="w-[78px]">
          <svg viewBox="0 0 16 16" className="mt-1 size-4" fill="#fff"><circle cx="2.500" cy="8" r="1.200" /><circle cx="8" cy="8" r="1.200" /><circle cx="13.500" cy="8" r="1.200" /></svg>
        </Action>
      </div>
    </footer>
  );
}

export default function App() {
  return (
    <div className="flex h-screen flex-col overflow-hidden font-['Noto_Sans',sans-serif]">
      <TopBar />
      <div className="flex min-h-0 flex-1">
        <Dock />
        <div className="flex min-w-0 flex-1 flex-col">
          <WindowTitle />
          <nav aria-label="Menu bar" className="flex h-[25px] shrink-0 items-center gap-3 bg-[#f7f7f7] pl-[6px] text-[15px] leading-5 text-[#3c3c3c]">
            {["File", "Edit", "View", "Tools", "Help"].map((item) => <button key={item}>{item}</button>)}
          </nav>
          <CallHeader />
          <Stage />
          <CallControls />
        </div>
      </div>
    </div>
  );
}
